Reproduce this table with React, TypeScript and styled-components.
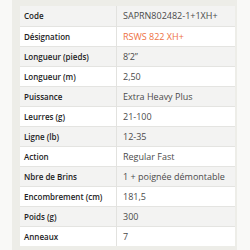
import React from "react";
import styled, { createGlobalStyle } from "styled-components";

interface ISpec {
  label: string;
  value: string;
  highlight?: boolean;
}

const specs: ISpec[] = [
  { label: "Code", value: "SAPRN802482-1+1XH+" },
  { label: "Désignation", value: "RSWS 822 XH+", highlight: true },
  { label: "Longueur (pieds)", value: "8’2”" },
  { label: "Longueur (m)", value: "2,50" },
  { label: "Puissance", value: "Extra Heavy Plus" },
  { label: "Leurres (g)", value: "21-100" },
  { label: "Ligne (lb)", value: "12-35" },
  { label: "Action", value: "Regular Fast" },
  { label: "Nbre de Brins", value: "1 + poignée démontable" },
  { label: "Encombrement (cm)", value: "181,5" },
  { label: "Poids (g)", value: "300" },
  { label: "Anneaux", value: "7" },
];

const GlobalStyle = createGlobalStyle`
  html, body {
    margin: 0;
    padding: 0;
    background: #f9f9f7;
    font-family: "Open Sans", "Liberation Sans", sans-serif;
  }
`;

const Page = styled.div`
  width: 250px;
  height: 250px;
  overflow: hidden;
  padding-left: 12px;
  box-sizing: border-box;
`;

const Panel = styled.div`
  width: 225px;
  height: 250px;
  background: #edede8;
  padding: 6px 2px 0 8px;
  box-sizing: border-box;
`;

const Table = styled.table`
  width: 215px;
  border-collapse: collapse;
  table-layout: fixed;
`;

interface IRow {
  shaded: boolean;
}
const Row = styled.tr<IRow>`
  height: 20px;
  background: ${({ shaded }) => (shaded ? "#f3f3f2" : "#ffffff")};
  border-bottom: 1px solid #e4e4e1;

  &:last-child {
    border-bottom: none;
  }
`;

const Label = styled.td`
  width: 92px;
  height: 19px;
  padding: 0 0 0 4px;
  font-size: 8px;
  font-weight: 600;
  color: #222;
  border-right: 1px solid #e2e2df;
  white-space: nowrap;
`;

interface IValue {
  highlight?: boolean;
}
const Value = styled.td<IValue>`
  height: 19px;
  padding: 0 0 0 6px;
  font-size: 9px;
  color: ${({ highlight }) => (highlight ? "#ee7041" : "#4a4a4a")};
  white-space: nowrap;
`;

const App = () => {
  return (
    <Page>
      <GlobalStyle />
      <Panel>
        <Table>
          <tbody>
            {specs.map((s, i) => (
              <Row key={s.label} shaded={i % 2 === 0}>
                <Label>{s.label}</Label>
                <Value highlight={s.highlight}>{s.value}</Value>
              </Row>
            ))}
          </tbody>
        </Table>
      </Panel>
    </Page>
  );
};

export default App;
